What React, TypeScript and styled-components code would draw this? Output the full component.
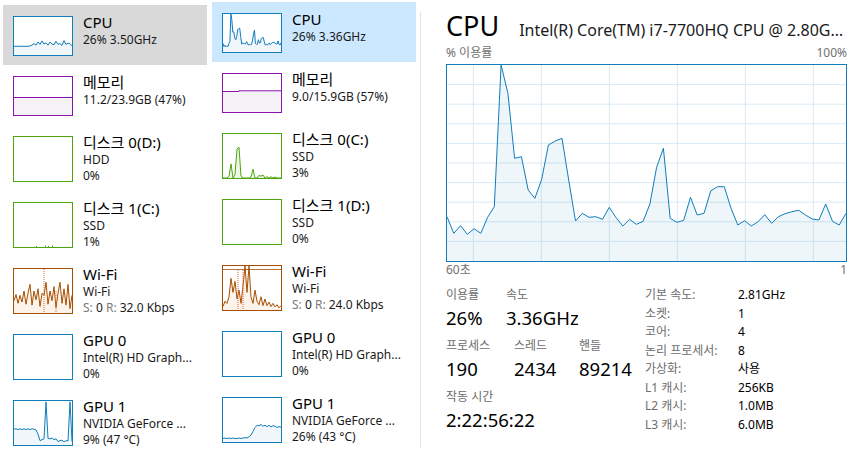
import React from 'react';
import styled, { createGlobalStyle } from 'styled-components';

const FONT = `"Noto Sans", "Noto Sans CJK KR", sans-serif`;

const C = {
  cpu: '#117dbb',
  cpuFill: '#f1f6fa',
  mem: '#8b12ae',
  memFill: '#f4f2f4',
  disk: '#4da60c',
  diskFill: '#eff7e7',
  net: '#a74f01',
  netFill: '#fcf3eb',
  grid: '#d9eaf4',
};

const GlobalStyle = createGlobalStyle`
  html, body { margin: 0; padding: 0; background: #fff; }
  body { font-family: ${FONT}; color: #000; }
`;

const Page = styled.div`
  display: flex;
  width: 850px;
  height: 459px;
  overflow: hidden;
  background: #fff;
`;

const Sidebar = styled.div<{ $top: number; $left: number }>`
  display: flex;
  flex-direction: column;
  flex-shrink: 0;
  width: 204px;
  margin-left: ${(p) => p.$left}px;
  padding-top: ${(p) => p.$top}px;
`;

const Item = styled.div<{ $h: number; $sel?: 'grey' | 'blue' }>`
  display: flex;
  align-items: flex-start;
  box-sizing: border-box;
  height: ${(p) => p.$h}px;
  padding: 11px 0 0 10px;
  background: ${(p) =>
    p.$sel === 'grey' ? '#d9d9d9' : p.$sel === 'blue' ? '#cce8ff' : 'transparent'};
`;

const Thumb = styled.div<{ $color: string; $h: number }>`
  flex-shrink: 0;
  box-sizing: border-box;
  width: 60px;
  height: ${(p) => p.$h}px;
  border: 1px solid ${(p) => p.$color};
  background: #fff;
  overflow: hidden;
  svg {
    display: block;
  }
`;

const ItemText = styled.div`
  display: flex;
  flex-direction: column;
  margin: -4.5px 0 0 10px;
  white-space: nowrap;
`;

const ItemTitle = styled.div`
  font-size: 15px;
  line-height: 20.5px;
  color: #000;
`;

const ItemSub = styled.div`
  font-size: 12px;
  line-height: 16.4px;
  color: #1a1a1a;
`;

const Dim = styled.span`
  color: #7a7a7a;
`;

const Divider = styled.div`
  flex-shrink: 0;
  width: 1px;
  margin: 12px 0 11px 4px;
  background: #e3e3e3;
`;

const Detail = styled.div`
  display: flex;
  flex-direction: column;
  flex: 1;
  min-width: 0;
  padding: 10px 3px 0 25px;
`;

const Header = styled.div`
  display: flex;
  align-items: baseline;
  white-space: nowrap;
  min-width: 0;
`;

const BigTitle = styled.div`
  flex-shrink: 0;
  font-size: 27px;
  line-height: 32px;
  color: #000;
`;

const CpuName = styled.div`
  margin-left: 20px;
  font-size: 16px;
  color: #1a1a1a;
  overflow: hidden;
  text-overflow: ellipsis;
  min-width: 0;
`;

const AxisRow = styled.div<{ $mt: number }>`
  display: flex;
  justify-content: space-between;
  margin-top: ${(p) => p.$mt}px;
  font-size: 12px;
  line-height: 14px;
  color: #707070;
`;

const ChartBox = styled.div`
  box-sizing: border-box;
  width: 401px;
  height: 198px;
  margin-top: 4px;
  border: 1px solid ${C.cpu};
  background: #fff;
  svg {
    display: block;
  }
`;

const Bottom = styled.div`
  display: flex;
  margin-top: 9px;
`;

const Stats = styled.div`
  display: flex;
  flex-direction: column;
  gap: 5px;
  width: 199px;
  flex-shrink: 0;
`;

const StatRow = styled.div`
  display: flex;
`;

const StatCell = styled.div<{ $w?: number }>`
  display: flex;
  flex-direction: column;
  width: ${(p) => (p.$w ? `${p.$w}px` : 'auto')};
  flex-shrink: 0;
  white-space: nowrap;
`;

const StatLabel = styled.div`
  font-size: 12px;
  line-height: 18px;
  color: #6d6d6d;
`;

const StatValue = styled.div`
  font-size: 18.5px;
  line-height: 28px;
  color: #000;
`;

const Specs = styled.div`
  display: grid;
  grid-template-columns: 93px auto;
  font-size: 12px;
  line-height: 18px;
  white-space: nowrap;
`;

const SpecLabel = styled.div`
  color: #6d6d6d;
`;

const SpecValue = styled.div`
  color: #000;
`;

/* ---------- drawings ---------- */

type SparkProps = { w?: number; h: number; values: number[]; stroke: string; fill: string };

const Spark = ({ w = 58, h, values, stroke, fill }: SparkProps) => {
  const step = w / (values.length - 1);
  const pts = values.map((v, i) => `${(i * step).toFixed(1)},${(v * h).toFixed(1)}`).join(' ');
  return (
    <>
      <polygon points={`0,${h} ${pts} ${w},${h}`} fill={fill} />
      <polyline points={pts} fill="none" stroke={stroke} strokeWidth={1} />
    </>
  );
};

const mainData = [
  152.7, 169.3, 161.7, 170.3, 164.7, 169.3, 153.3, 142.7, 0.5, 29.3, 94.3, 92.7, 126, 134.3,
  115.3, 81, 77, 74.3, 116, 157, 149.3, 153.3, 152.7, 155.3, 143.3, 153.7, 162, 155.3, 160.3,
  157.3, 140, 103.3, 84.3, 154.3, 158.3, 156.3, 133.3, 151, 149.3, 127, 122.7, 122.7, 144.3,
  161, 156.7, 162, 157.7, 150.7, 159.3, 152.7, 149.7, 147.7, 146.3, 151, 155, 156, 140, 157.3,
  161, 149.3,
];
const mainFrac = mainData.map((y) => Math.max(0, (y - 1) / 196));

const MainChart = () => {
  const W = 399;
  const H = 196;
  const hLines = Array.from({ length: 9 }, (_, i) => (i + 1) * (H / 10));
  const vLines = Array.from({ length: 6 }, (_, i) => 26.3 + i * 68);
  return (
    <svg width={W} height={H} viewBox={`0 0 ${W} ${H}`}>
      {hLines.map((y) => (
        <line key={`h${y}`} x1={0} x2={W} y1={y} y2={y} stroke={C.grid} strokeWidth={1} />
      ))}
      {vLines.map((x) => (
        <line key={`v${x}`} x1={x} x2={x} y1={0} y2={H} stroke={C.grid} strokeWidth={1} />
      ))}
      <Spark w={W} h={H} values={mainFrac} stroke={C.cpu} fill="rgba(17,125,187,0.07)" />
    </svg>
  );
};

const cpu1 = [
  0.77, 0.77, 0.77, 0.77, 0.77, 0.77, 0.77, 0.77, 0.76, 0.74, 0.7, 0.74, 0.66, 0.72, 0.63,
  0.71, 0.68, 0.74, 0.66, 0.71, 0.73, 0.64, 0.72, 0.7, 0.75, 0.62, 0.72, 0.69, 0.7, 0.76,
];
const gpu1a = [
  0.64, 0.63, 0.65, 0.63, 0.65, 0.63, 0.65, 0.63, 0.65, 0.63, 0.64, 0.66, 0.75, 0.9, 0.88,
  0.86, 0.02, 0.85, 0.86, 0.84, 0.88, 0.86, 0.92, 0.9, 0.89, 0.93, 0.9, 0.91, 0.02, 0.92,
];
const gpu1b = [
  0.92, 0.91, 0.92, 0.91, 0.92, 0.91, 0.92, 0.92, 0.91, 0.92, 0.91, 0.9, 0.91, 0.88, 0.84,
  0.76, 0.67, 0.62, 0.63, 0.6, 0.64, 0.62, 0.65, 0.62, 0.66, 0.63, 0.64, 0.67, 0.65, 0.66,
];
const net1 = [
  0.72, 0.58, 0.78, 0.6, 0.75, 0.5, 0.8, 0.55, 0.35, 0.82, 0.5, 0.7, 0.45, 0.85, 0.55, 0.6,
  0.3, 0.8, 0.5, 0.72, 0.4, 0.88, 0.55, 0.3, 0.78, 0.45, 0.82, 0.35, 0.9, 0.6,
];
const net2 = [
  0.92, 0.8, 0.85, 0.7, 0.28, 0.6, 0.35, 0.75, 0.55, 0.85, 0.45, 0.0, 0.6, 0.0, 0.7, 0.85,
  0.55, 0.8, 0.88, 0.7, 0.9, 0.75, 0.9, 0.82, 0.92, 0.85, 0.93, 0.88, 0.95, 0.9,
];
const disk2 = [
  1, 1, 1, 0.96, 0.68, 1, 0.92, 0.34, 0.3, 0.96, 1, 1, 1, 1, 0.98, 0.8, 1, 1, 0.94, 0.96, 0.93,
  1, 0.97, 1, 0.97, 1, 0.98, 1, 1, 1,
];

const ThumbSvg = ({ h, children }: { h: number; children?: React.ReactNode }) => (
  <svg width={58} height={h} viewBox={`0 0 58 ${h}`}>
    {children}
  </svg>
);

const MemLine = ({ y, step }: { y: number; step?: number }) => (
  <>
    <rect x={0} y={y} width={58} height={38 - y} fill={C.memFill} />
    {step != null ? (
      <polyline
        points={`0,${y} ${step},${y} ${step},${y - 0.7} 58,${y - 0.7}`}
        fill="none"
        stroke={C.mem}
        strokeWidth={1}
      />
    ) : (
      <line x1={0} x2={58} y1={y} y2={y} stroke={C.mem} strokeWidth={1} />
    )}
  </>
);

type Entry = {
  title: string;
  lines: React.ReactNode[];
  color: string;
  draw?: React.ReactNode;
  sel?: 'grey' | 'blue';
};

const SideItem = ({ e }: { e: Entry }) => {
  const h = e.lines.length >= 2 ? 66 : 60;
  const th = h - 20;
  return (
    <Item $h={h} $sel={e.sel}>
      <Thumb $color={e.color} $h={th}>
        <ThumbSvg h={th - 2}>{e.draw}</ThumbSvg>
      </Thumb>
      <ItemText>
        <ItemTitle>{e.title}</ItemTitle>
        {e.lines.map((l, i) => (
          <ItemSub key={i}>{l}</ItemSub>
        ))}
      </ItemText>
    </Item>
  );
};

const netSub = (r: string) => (
  <>
    <Dim>S:</Dim> 0 <Dim>R:</Dim> {r}
  </>
);

const colA: Entry[] = [
  {
    title: 'CPU',
    lines: ['26% 3.50GHz'],
    color: C.cpu,
    sel: 'grey',
    draw: <Spark h={38} values={cpu1} stroke={C.cpu} fill={C.cpuFill} />,
  },
  {
    title: '메모리',
    lines: ['11.2/23.9GB (47%)'],
    color: C.mem,
    draw: <MemLine y={20.5} />,
  },
  { title: '디스크 0(D:)', lines: ['HDD', '0%'], color: C.disk },
  {
    title: '디스크 1(C:)',
    lines: ['SSD', '1%'],
    color: C.disk,
    draw: (
      <>
        <rect x={22} y={43} width={1} height={1} fill={C.disk} />
        <rect x={31} y={42.5} width={1} height={1.5} fill={C.disk} />
        <rect x={34} y={43} width={1} height={1} fill={C.disk} />
        <rect x={38} y={42.5} width={1} height={1.5} fill={C.disk} />
      </>
    ),
  },
  {
    title: 'Wi-Fi',
    lines: ['Wi-Fi', netSub('32.0 Kbps')],
    color: C.net,
    draw: (
      <>
        <Spark h={44} values={net1} stroke={C.net} fill={C.netFill} />
        <line x1={30} x2={30} y1={0} y2={44} stroke="#e0622a" strokeWidth={1} strokeDasharray="1 1" />
        <line x1={42} x2={42} y1={22} y2={44} stroke="#e0622a" strokeWidth={1} strokeDasharray="1 1" />
      </>
    ),
  },
  { title: 'GPU 0', lines: ['Intel(R) HD Graph...', '0%'], color: C.cpu },
  {
    title: 'GPU 1',
    lines: ['NVIDIA GeForce ...', '9% (47 °C)'],
    color: C.cpu,
    draw: <Spark h={44} values={gpu1a} stroke={C.cpu} fill={C.cpuFill} />,
  },
];

const colB: Entry[] = [
  {
    title: 'CPU',
    lines: ['26% 3.36GHz'],
    color: C.cpu,
    sel: 'blue',
    draw: <Spark h={38} values={mainFrac} stroke={C.cpu} fill={C.cpuFill} />,
  },
  {
    title: '메모리',
    lines: ['9.0/15.9GB (57%)'],
    color: C.mem,
    draw: <MemLine y={17.5} step={16} />,
  },
  {
    title: '디스크 0(C:)',
    lines: ['SSD', '3%'],
    color: C.disk,
    draw: <Spark h={44} values={disk2} stroke={C.disk} fill={C.diskFill} />,
  },
  { title: '디스크 1(D:)', lines: ['SSD', '0%'], color: C.disk },
  {
    title: 'Wi-Fi',
    lines: ['Wi-Fi', netSub('24.0 Kbps')],
    color: C.net,
    draw: (
      <>
        <Spark h={44} values={net2} stroke={C.net} fill={C.netFill} />
        <line x1={0} x2={58} y1={3.5} y2={3.5} stroke={C.net} strokeWidth={0.8} />
        <line x1={15} x2={15} y1={4} y2={44} stroke="#e0622a" strokeWidth={1} strokeDasharray="1 1" />
        <line x1={20} x2={20} y1={4} y2={44} stroke="#e0622a" strokeWidth={1} strokeDasharray="1 1" />
      </>
    ),
  },
  { title: 'GPU 0', lines: ['Intel(R) HD Graph...', '0%'], color: C.cpu },
  {
    title: 'GPU 1',
    lines: ['NVIDIA GeForce ...', '26% (43 °C)'],
    color: C.cpu,
    draw: <Spark h={44} values={gpu1b} stroke={C.cpu} fill={C.cpuFill} />,
  },
];

const specs: [string, string][] = [
  ['기본 속도:', '2.81GHz'],
  ['소켓:', '1'],
  ['코어:', '4'],
  ['논리 프로세서:', '8'],
  ['가상화:', '사용'],
  ['L1 캐시:', '256KB'],
  ['L2 캐시:', '1.0MB'],
  ['L3 캐시:', '6.0MB'],
];

export default function App() {
  return (
    <>
      <GlobalStyle />
      <Page>
        <Sidebar $left={3} $top={5}>
          {colA.map((e, i) => (
            <SideItem key={i} e={e} />
          ))}
        </Sidebar>
        <Sidebar $left={5} $top={2}>
          {colB.map((e, i) => (
            <SideItem key={i} e={e} />
          ))}
        </Sidebar>
        <Divider />
        <Detail>
          <Header>
            <BigTitle>CPU</BigTitle>
            <CpuName>Intel(R) Core(TM) i7-7700HQ CPU @ 2.80GHz</CpuName>
          </Header>
          <AxisRow $mt={4}>
            <span>% 이용률</span>
            <span>100%</span>
          </AxisRow>
          <ChartBox>
            <MainChart />
          </ChartBox>
          <AxisRow $mt={1}>
            <span>60초</span>
            <span>1</span>
          </AxisRow>
          <Bottom>
            <Stats>
              <StatRow>
                <StatCell $w={60}>
                  <StatLabel>이용률</StatLabel>
                  <StatValue>26%</StatValue>
                </StatCell>
                <StatCell>
                  <StatLabel>속도</StatLabel>
                  <StatValue>3.36GHz</StatValue>
                </StatCell>
              </StatRow>
              <StatRow>
                <StatCell $w={68}>
                  <StatLabel>프로세스</StatLabel>
                  <StatValue>190</StatValue>
                </StatCell>
                <StatCell $w={65}>
                  <StatLabel>스레드</StatLabel>
                  <StatValue>2434</StatValue>
                </StatCell>
                <StatCell>
                  <StatLabel>핸들</StatLabel>
                  <StatValue>89214</StatValue>
                </StatCell>
              </StatRow>
              <StatRow>
                <StatCell>
                  <StatLabel>작동 시간</StatLabel>
                  <StatValue>2:22:56:22</StatValue>
                </StatCell>
              </StatRow>
            </Stats>
            <Specs>
              {specs.map(([k, v]) => (
                <React.Fragment key={k}>
                  <SpecLabel>{k}</SpecLabel>
                  <SpecValue>{v}</SpecValue>
                </React.Fragment>
              ))}
            </Specs>
          </Bottom>
        </Detail>
      </Page>
    </>
  );
}
